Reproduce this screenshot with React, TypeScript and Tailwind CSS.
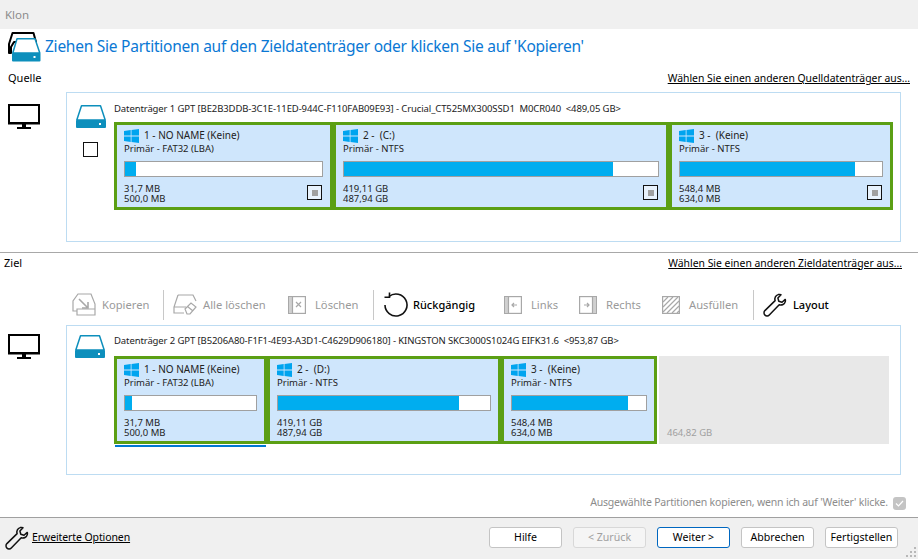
import type { ReactNode } from 'react'

interface Part {
  id: string
  name: string
  fs: string
  width: number
  barWidth: number
  used: number
  line1: string
  line2: string
}

const sourceParts: Part[] = [
  { id: 's1', name: '1 - NO NAME (Keine)', fs: 'Primär - FAT32 (LBA)', width: 219, barWidth: 199, used: 5.5, line1: '31,7 MB', line2: '500,0 MB' },
  { id: 's2', name: '2 -  (C:)', fs: 'Primär - NTFS', width: 336, barWidth: 316, used: 85.6, line1: '419,11 GB', line2: '487,94 GB' },
  { id: 's3', name: '3 -  (Keine)', fs: 'Primär - NTFS', width: 224, barWidth: 204, used: 86.5, line1: '548,4 MB', line2: '634,0 MB' },
]

const targetParts: Part[] = [
  { id: 't1', name: '1 - NO NAME (Keine)', fs: 'Primär - FAT32 (LBA)', width: 153, barWidth: 133, used: 5, line1: '31,7 MB', line2: '500,0 MB' },
  { id: 't2', name: '2 -  (D:)', fs: 'Primär - NTFS', width: 234, barWidth: 214, used: 85.6, line1: '419,11 GB', line2: '487,94 GB' },
  { id: 't3', name: '3 -  (Keine)', fs: 'Primär - NTFS', width: 156, barWidth: 136, used: 86.5, line1: '548,4 MB', line2: '634,0 MB' },
]

function WinLogo() {
  return (
    <svg width="15" height="14" viewBox="0 0 15 14" className="shrink-0">
      <path d="M0 2 L6.7 1.1 V6.6 H0 Z M7.5 1 L15 0 V6.6 H7.5 Z M0 7.4 H6.7 V12.9 L0 12 Z M7.5 7.4 H15 V14 L7.5 13 Z" fill="#00a4ef" />
    </svg>
  )
}

function DriveIcon() {
  return (
    <svg width="30" height="23" viewBox="0 0 30 23" className="block">
      <path d="M5.5 0.8 H24.5 L29.2 15 H0.8 Z" fill="#fff" stroke="#0d8fbc" strokeWidth="1.5" strokeLinejoin="round" />
      <rect x="0" y="15" width="30" height="8" rx="1" fill="#0d8fbc" />
      <rect x="23" y="18" width="2" height="2" fill="#fff" />
    </svg>
  )
}

function Monitor() {
  return (
    <svg width="32" height="25" viewBox="0 0 32 25" className="block">
      <rect x="1" y="1" width="30" height="18" fill="#fff" stroke="#000" strokeWidth="2" />
      <rect x="0" y="19" width="32" height="1.5" fill="#000" />
      <rect x="14" y="20" width="4" height="3" fill="#000" />
      <rect x="9" y="23" width="14" height="2" fill="#000" />
    </svg>
  )
}

function Wrench({ size = 24 }: { size?: number }) {
  return (
    <svg width={size} height={size} viewBox="0 0 24 24" className="shrink-0">
      <path
        d="M15.2 1.6 C12.6 2.3 11.3 4.9 12.1 7.6 L1.9 17.6 C0.6 19 0.8 21 2 22.1 C3.2 23.3 5.1 23.2 6.3 21.9 L16.2 11.8 C18.9 12.6 21.6 11.3 22.3 8.6 C22.5 7.8 22.5 7.1 22.3 6.4 L19 9.3 L15.8 8.3 L14.9 5 L18 1.7 C17.1 1.4 16.1 1.4 15.2 1.6 Z"
        fill="none"
        stroke="#111"
        strokeWidth="1.5"
        strokeLinejoin="round"
      />
    </svg>
  )
}

function Partition({ part, showBox }: { part: Part; showBox: boolean }) {
  return (
    <div
      className="relative flex h-full shrink-0 flex-col border-[3px] border-[#5b9f14] bg-[#cfe6fc] pl-[7px] pt-[4px] text-[9.5px] leading-[12px] text-[#222]"
      style={{ width: part.width }}
    >
      <div className="flex h-[14px] items-center gap-[5px]">
        <WinLogo />
        <span className="-mt-[2px] whitespace-pre text-[10px]">{part.name}</span>
      </div>
      <div className="h-[12px] whitespace-pre">{part.fs}</div>
      <div className="mt-[6px] h-[16px] border border-[#a0a0a0] bg-white" style={{ width: part.barWidth }}>
        <div className="h-full bg-[#00adef]" style={{ width: `${part.used}%` }} />
      </div>
      <div className="mt-[7px] leading-[10px]">{part.line1}</div>
      <div className="leading-[10px]">{part.line2}</div>
      {showBox && (
        <div className="absolute right-[8px] top-[60px] flex h-[15px] w-[15px] items-center justify-center border border-[#111] bg-[#e8f2fc]">
          <div className="h-[6px] w-[6px] bg-[#a0a0a0]" />
        </div>
      )}
    </div>
  )
}

function ToolItem({ icon, label, active, className = '' }: { icon: ReactNode; label: string; active?: boolean; className?: string }) {
  return (
    <div className={`flex h-full items-center ${className}`}>
      {icon}
      <span className={active ? 'text-[11px] font-medium text-black' : 'text-[11.2px] text-[#9a9a9a]'}>{label}</span>
    </div>
  )
}

function Sep({ className = '' }: { className?: string }) {
  return <div className={`h-[30px] w-px bg-[#c8c8c8] ${className}`} />
}

function FooterButton({ label, state }: { label: string; state?: 'disabled' | 'default' }) {
  const cls =
    state === 'disabled'
      ? 'border-[#d8d8d8] bg-[#f5f5f5] text-[#a0a0a0]'
      : state === 'default'
        ? 'border-[#0067c0] bg-white text-black'
        : 'border-[#c4c4c4] bg-white text-black'
  return (
    <button className={`flex h-[21px] w-[73px] items-center justify-center rounded-[3px] border text-[10.6px] ${cls}`}>{label}</button>
  )
}

export default function App() {
  return (
    <div className="relative flex h-[559px] w-[918px] flex-col overflow-hidden bg-white font-['Noto_Sans',sans-serif] text-black">
      <div className="flex h-[29px] items-center bg-[#f0f0f0] pl-[5px] text-[11.5px] text-[#8c8c8c]">Klon</div>

      <div className="flex h-[36px] items-center pl-[8px]">
        <svg width="33" height="30" viewBox="0 0 33 30" className="-mt-[1px]">
          <path d="M4.5 1 H25.5 L28 10 H6 L3 15 V21 H1 V12 Z" fill="#fff" stroke="#000" strokeWidth="2" strokeLinejoin="round" />
          <g transform="translate(4 6)">
            <path d="M5 0.8 H23 L27.8 15 H0.8 Z" fill="#fff" stroke="#0d8fbc" strokeWidth="1.5" strokeLinejoin="round" />
            <rect x="0" y="15" width="28.5" height="8.5" rx="1" fill="#0d8fbc" />
            <rect x="21.5" y="18" width="2" height="2" fill="#fff" />
          </g>
        </svg>
        <h1 className="ml-[4px] text-[15.5px] font-normal tracking-[-0.245px] text-[#0a78d4]">
          Ziehen Sie Partitionen auf den Zieldatenträger oder klicken Sie auf 'Kopieren'
        </h1>
      </div>

      <div className="flex h-[27px] items-start justify-between px-[8px] pt-[5px] text-[10.4px] leading-[16px]">
        <span className="text-[11px]">Quelle</span>
        <span className="underline">Wählen Sie einen anderen Quelldatenträger aus...</span>
      </div>

      <div className="flex h-[150px]">
        <div className="w-[66px] pl-[8px] pt-[12px]">
          <Monitor />
        </div>
        <div className="flex w-[835px] border border-[#bddcf2] pl-[8px] pt-[12px]">
          <div className="flex w-[39px] flex-col items-center pr-[8px]">
            <DriveIcon />
            <div className="mt-[14px] h-[15px] w-[15px] border border-[#111]" />
          </div>
          <div className="flex flex-col">
            <div className="-mt-[2px] h-[19px] whitespace-pre text-[9.5px] leading-[12px] tracking-[-0.1px] text-[#222]">
              {'Datenträger 1 GPT [BE2B3DDB-3C1E-11ED-944C-F110FAB09E93] - Crucial_CT525MX300SSD1  M0CR040  <489,05 GB>'}
            </div>
            <div className="flex h-[88px]">
              {sourceParts.map((part) => (
                <Partition key={part.id} part={part} showBox />
              ))}
            </div>
          </div>
        </div>
      </div>

      <div className="mt-[10px] h-px bg-[#a8a8a8]" />
      <div className="flex h-[21px] items-center justify-between pl-[4px] pr-[16px] text-[10.4px]">
        <span className="text-[11px]">Ziel</span>
        <span className="underline">Wählen Sie einen anderen Zieldatenträger aus...</span>
      </div>

      <div className="mt-[15px] flex h-[32px] items-center pl-[72px]">
        <ToolItem
          className="w-[91px]"
          label="Kopieren"
          icon={
            <svg width="24" height="24" viewBox="0 0 24 24" className="mr-[6px]" fill="none" stroke="#a8a8a8" strokeWidth="1.2">
              <path d="M6 1 H19 L23 11 V22 H5 V18 H1 V8 Z M5 18 V16 H23" />
              <path d="M7 6 L16 15 M16 9 V15 H10" strokeWidth="1.6" />
            </svg>
          }
        />
        <Sep />
        <ToolItem
          className="ml-[9px] w-[115px]"
          label="Alle löschen"
          icon={
            <svg width="24" height="22" viewBox="0 0 24 22" className="mr-[6px]" fill="none" stroke="#a8a8a8" strokeWidth="1.2">
              <path d="M5 1 H20 L23 7 M5 1 L1 13 V19 H11 M1 13 H13" />
              <path d="M12 15 L18 9 L23 13 L17 20 H14 Z M14.5 12.5 L20 17" />
            </svg>
          }
        />
        <ToolItem
          className="w-[85px]"
          label="Löschen"
          icon={
            <svg width="18" height="18" viewBox="0 0 18 18" className="mr-[9px]" fill="none" stroke="#a8a8a8" strokeWidth="1.2">
              <rect x="0.6" y="0.6" width="16.8" height="16.8" />
              <rect x="1" y="1" width="3.5" height="16" fill="#d0d0d0" stroke="none" />
              <path d="M4.5 1 V17 M8 6 L13 11 M13 6 L8 11" />
            </svg>
          }
        />
        <Sep />
        <ToolItem
          className="ml-[9px] w-[121px]"
          label="Rückgängig"
          active
          icon={
            <svg width="26" height="26" viewBox="0 0 26 26" className="mr-[4px]" fill="none" stroke="#111" strokeWidth="1.6">
              <path d="M6 4.5 A11 11 0 1 1 2 13" />
              <path d="M6.5 0.5 V5.2 H1.5" />
            </svg>
          }
        />
        <ToolItem
          className="w-[75px]"
          label="Links"
          icon={
            <svg width="18" height="18" viewBox="0 0 18 18" className="mr-[9px]" fill="none" stroke="#a8a8a8" strokeWidth="1.2">
              <rect x="0.6" y="0.6" width="16.8" height="16.8" />
              <rect x="1" y="1" width="3.5" height="16" fill="#d0d0d0" stroke="none" />
              <path d="M4.5 1 V17 M13 9 H8 M10 7 L8 9 L10 11" />
            </svg>
          }
        />
        <ToolItem
          className="w-[83px]"
          label="Rechts"
          icon={
            <svg width="18" height="18" viewBox="0 0 18 18" className="mr-[9px]" fill="none" stroke="#a8a8a8" strokeWidth="1.2">
              <rect x="0.6" y="0.6" width="16.8" height="16.8" />
              <rect x="13.5" y="1" width="3.5" height="16" fill="#d0d0d0" stroke="none" />
              <path d="M13.5 1 V17 M5 9 H10 M8 7 L10 9 L8 11" />
            </svg>
          }
        />
        <ToolItem
          className="w-[91px]"
          label="Ausfüllen"
          icon={
            <svg width="18" height="18" viewBox="0 0 18 18" className="mr-[9px]" fill="none" stroke="#a8a8a8" strokeWidth="1.2">
              <rect x="0.6" y="0.6" width="16.8" height="16.8" />
              <path d="M1 6 L6 1 M1 11 L11 1 M1 16 L16 1 M5 17 L17 5 M10 17 L17 10 M15 17 L17 15" />
            </svg>
          }
        />
        <Sep />
        <ToolItem className="ml-[9px]" label="Layout" active icon={<span className="mr-[6px]"><Wrench /></span>} />
      </div>

      <div className="mt-[4px] flex h-[150px]">
        <div className="w-[66px] pl-[8px] pt-[9px]">
          <Monitor />
        </div>
        <div className="flex w-[835px] border border-[#bddcf2] pl-[8px] pt-[9px]">
          <div className="w-[39px] pr-[8px]">
            <DriveIcon />
          </div>
          <div className="flex flex-col">
            <div className="h-[21px] whitespace-pre text-[9.5px] leading-[12px] tracking-[-0.1px] text-[#222]">
              {'Datenträger 2 GPT [B5206A80-F1F1-4E93-A3D1-C4629D906180] - KINGSTON SKC3000S1024G EIFK31.6  <953,87 GB>'}
            </div>
            <div className="flex h-[88px]">
              {targetParts.map((part) => (
                <Partition key={part.id} part={part} showBox={false} />
              ))}
              <div className="ml-[2px] flex w-[230px] items-end bg-[#e8e8e8] pb-[5px] pl-[8px] text-[9.5px] leading-[12px] text-[#a0a0a0]">
                464,82 GB
              </div>
            </div>
            <div className="ml-[1px] mt-[1px] h-[2px] w-[151px] bg-[#0078d4]" />
          </div>
        </div>
      </div>

      <div className="flex h-[42px] items-center justify-end pr-[12px] pt-[14px] text-[10.5px] tracking-[-0.18px] text-[#8c8c8c]">
        <span>Ausgewählte Partitionen kopieren, wenn ich auf 'Weiter' klicke.</span>
        <div className="ml-[5px] flex h-[13px] w-[13px] items-center justify-center rounded-[3px] bg-[#c4c4c4]">
          <svg width="9" height="9" viewBox="0 0 9 9" fill="none" stroke="#fff" strokeWidth="1.2">
            <path d="M1 4.5 L3.5 7 L8 2" />
          </svg>
        </div>
      </div>

      <div className="flex flex-1 items-center border-t border-[#a0a0a0] bg-[#f0f0f0] pb-[2px] pl-[5px] pr-[20px]">
        <Wrench size={24} />
        <span className="ml-[3px] text-[10.5px] tracking-[-0.1px] underline">Erweiterte Optionen</span>
        <div className="ml-auto flex gap-[11px]">
          <FooterButton label="Hilfe" />
          <FooterButton label="< Zurück" state="disabled" />
          <FooterButton label="Weiter >" state="default" />
          <FooterButton label="Abbrechen" />
          <FooterButton label="Fertigstellen" />
        </div>
        <svg width="11" height="11" viewBox="0 0 11 11" className="absolute bottom-[1px] right-[1px]" fill="#b8b8b8">
          <rect x="8" y="0" width="2" height="2" />
          <rect x="4" y="4" width="2" height="2" />
          <rect x="8" y="4" width="2" height="2" />
          <rect x="0" y="8" width="2" height="2" />
          <rect x="4" y="8" width="2" height="2" />
          <rect x="8" y="8" width="2" height="2" />
        </svg>
      </div>
    </div>
  )
}
